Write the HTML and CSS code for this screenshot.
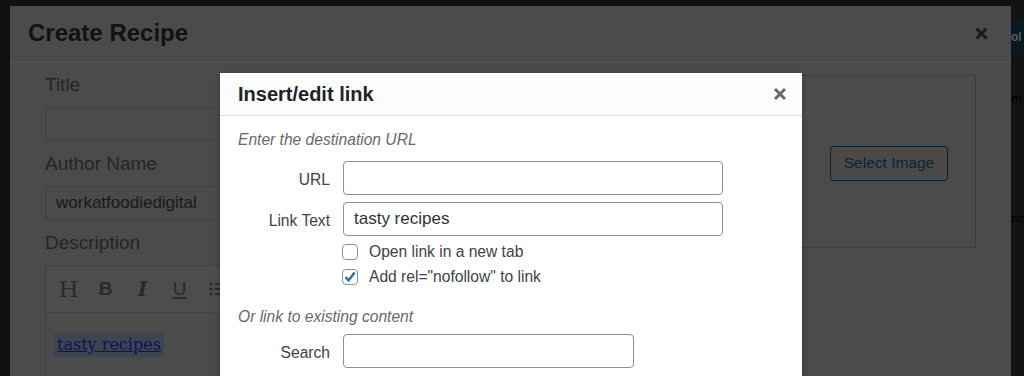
FILE: index.html
```html
<!DOCTYPE html>
<html lang="en">
<head>
	<meta charset="UTF-8">
	<title>Insert/edit link</title>
	<link rel="stylesheet" href="styles.css">
</head>
<body>
	<div class="page">
		<div class="edge"></div>

		<div class="modal">
			<div class="modal-head">
				<h1>Create Recipe</h1>
				<svg class="modal-close" width="13" height="13" viewBox="0 0 13 13"><path d="M1.5 1.5 L11.5 11.5 M11.5 1.5 L1.5 11.5" stroke="#1a1a1a" stroke-width="3"/></svg>
			</div>
			<div class="modal-body">
				<div class="form-col">
					<div class="field-label">Title</div>
					<div class="field-input"></div>
					<div class="field-label">Author Name</div>
					<div class="field-input">workatfoodiedigital</div>
					<div class="field-label">Description</div>
					<div class="editor">
						<div class="toolbar">
							<span class="tool tool-h">H</span>
							<span class="tool tool-b">B</span>
							<span class="tool tool-i">I</span>
							<span class="tool tool-u">U</span>
							<span class="tool">
								<svg width="16" height="14" viewBox="0 0 16 14"><circle cx="2" cy="2" r="1.6" fill="#2a2a2a"/><circle cx="2" cy="7" r="1.6" fill="#2a2a2a"/><circle cx="2" cy="12" r="1.6" fill="#2a2a2a"/><path d="M6 2h10M6 7h10M6 12h10" stroke="#2a2a2a" stroke-width="2"/></svg>
							</span>
						</div>
						<div class="editor-content">
							<a class="sel-link" href="javascript:;">tasty recipes</a>
						</div>
					</div>
				</div>
				<div class="image-panel">
					<button class="select-btn">Select Image</button>
				</div>
			</div>
		</div>

		<div class="edge edge-right">
			<div class="edge-bar">ol</div>
			<div class="edge-text">m</div>
			<div class="edge-text edge-text-low">nc</div>
		</div>
	</div>

	<div class="link-dialog">
		<div class="link-head">
			<h2>Insert/edit link</h2>
			<svg class="link-close" width="14" height="14" viewBox="0 0 14 14"><path d="M2 2 L12 12 M12 2 L2 12" stroke="#646970" stroke-width="3"/></svg>
		</div>
		<div class="link-body">
			<p class="hint">Enter the destination URL</p>
			<div class="link-row">
				<span class="row-label">URL</span>
				<div class="row-input"></div>
			</div>
			<div class="link-row">
				<span class="row-label">Link Text</span>
				<div class="row-input">tasty recipes</div>
			</div>
			<div class="check-row">
				<span class="check"></span>
				<span>Open link in a new tab</span>
			</div>
			<div class="check-row check-row-next">
				<span class="check">
					<svg width="16" height="16" viewBox="0 0 16 16"><path d="M3.5 8.2 L6.6 11.4 L12.6 3.6" fill="none" stroke="#2271b1" stroke-width="2.4"/></svg>
				</span>
				<span>Add rel="nofollow" to link</span>
			</div>
			<p class="hint hint-gap">Or link to existing content</p>
			<div class="link-row">
				<span class="row-label">Search</span>
				<div class="row-input row-input-short"></div>
			</div>
		</div>
	</div>
</body>
</html>
```

FILE: styles.css
```css
*{margin: 0;padding: 0;box-sizing: border-box}
body{
	width: 1024px;
	height: 376px;
	overflow: hidden;
	position: relative;
	background: #0f1110;
	font-family: "Liberation Sans", Arial, sans-serif;
}
.page{
	display: flex;
	height: 376px;
	padding-top: 6px;
}
.edge{
	width: 10px;
	background: #0f1110;
}
.edge-right{
	flex: 1;
	margin-top: -6px;
	background: #121413;
	overflow: hidden;
	padding-top: 19px;
}
.edge-bar{
	height: 36px;
	background: #0b1822;
	color: #56606a;
	font: bold 12px/36px "Liberation Sans", sans-serif;
}
.edge-text{
	margin-top: 34px;
	color: #000;
	font: 13px/20px "Liberation Sans", sans-serif;
}
.edge-text-low{
	margin-top: 100px;
}
.modal{
	width: 1001px;
	background: #4b4b4b;
}
.modal-head{
	height: 57px;
	display: flex;
	align-items: center;
	justify-content: space-between;
	padding: 0 23px 2px 18px;
	border-bottom: 1px solid #555;
}
.modal-head h1{
	font-size: 24px;
	font-weight: bold;
	color: #121212;
}
.modal-body{
	display: flex;
	padding: 10px 35px 0 35px;
}
.form-col{
	flex: 1;
}
.field-label{
	font-size: 19px;
	line-height: 24px;
	color: #252525;
	margin-bottom: 10px;
}
.field-input{
	height: 34px;
	border: 1px solid #3f3f3f;
	border-radius: 4px;
	margin-bottom: 11px;
	padding-left: 10px;
	font-size: 17px;
	line-height: 32px;
	color: #1a1a1a;
}
.editor{
	border: 1px solid #404040;
	border-bottom: none;
	height: 120px;
}
.toolbar{
	height: 47px;
	display: flex;
	align-items: center;
	padding-left: 4px;
	background: #4d4d4d;
	border-bottom: 1px solid #444;
}
.tool{
	width: 37px;
	display: flex;
	justify-content: center;
	align-items: center;
	color: #2a2a2a;
	font-size: 19px;
}
.tool-h{
	font: 23px "DejaVu Serif", serif;
}
.tool-b{
	font-weight: bold;
}
.tool-i{
	font: italic bold 20px "DejaVu Serif", serif;
}
.tool-u{
	text-decoration: underline;
	text-decoration-thickness: 2px;
	text-underline-offset: 2px;
}
.editor-content{
	padding: 20px 0 0 8px;
}
.sel-link{
	display: inline-block;
	padding: 0 3px;
	background: #3d4650;
	border-radius: 2px;
	color: #10105e;
	font: 16px/24px "DejaVu Serif", serif;
}
.image-panel{
	width: 356px;
	height: 173px;
	margin: 2px 0 0 20px;
	border: 1px solid #3d3d3d;
	display: flex;
	justify-content: flex-end;
	align-items: center;
	padding: 3px 27px 0 0;
}
.select-btn{
	width: 118px;
	height: 35px;
	border: 1px solid #0a2235;
	border-radius: 3px;
	background: #4a4a4a;
	color: #0a2436;
	font: 15.5px "Liberation Sans", sans-serif;
}

/* insert/edit link dialog */
.link-dialog{
	position: absolute;
	left: 220px;
	top: 73px;
	width: 582px;
	height: 320px;
	background: #fff;
	box-shadow: 0 3px 6px rgba(0,0,0,0.3);
}
.link-head{
	height: 43px;
	display: flex;
	align-items: center;
	justify-content: space-between;
	padding: 0 15px 0 18px;
	background: #fcfcfc;
	border-bottom: 1px solid #dcdcde;
}
.link-head h2{
	font-size: 20px;
	font-weight: bold;
	color: #1d2327;
}
.link-body{
	padding: 14px 18px 0 18px;
	color: #3c434a;
	font-size: 15.6px;
}
.hint{
	font-style: italic;
	line-height: 20px;
	color: #646970;
	margin-bottom: 11px;
}
.hint-gap{
	margin-top: 22px;
	margin-bottom: 7px;
}
.link-row{
	display: flex;
	align-items: center;
	gap: 13px;
	margin-bottom: 7px;
}
.row-label{
	width: 92px;
	text-align: right;
	padding-top: 3px;
}
.row-input{
	width: 380px;
	height: 34px;
	border: 1px solid #8c8f94;
	border-radius: 4px;
	padding-left: 10px;
	font-size: 17px;
	line-height: 32px;
	color: #2c3338;
}
.row-input-short{
	width: 291px;
}
.check-row{
	display: flex;
	align-items: center;
	gap: 11px;
	height: 16px;
	margin: 8px 0 0 104px;
}
.check-row-next{
	margin-top: 9px;
}
.check{
	width: 16px;
	height: 16px;
	border: 1px solid #8c8f94;
	border-radius: 4px;
	display: flex;
	align-items: center;
	justify-content: center;
}
.check svg{
	flex: none;
}
```
